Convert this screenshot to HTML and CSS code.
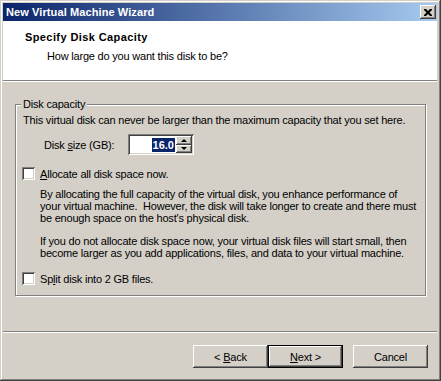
FILE: index.html
```html
<!DOCTYPE html>
<html lang="en">
<head>
  <meta charset="UTF-8">
  <title>New Virtual Machine Wizard</title>
  <link rel="stylesheet" href="styles.css">
</head>
<body>
<div class="window">
  <div class="titlebar">
    <span class="title">New Virtual Machine Wizard</span>
    <div class="close">
      <svg width="8" height="7" viewBox="0 0 8 7"><path d="M0 0h2l2 2 2-2h2v1L5.5 3.5 8 6v1H6L4 5 2 7H0V6l2.5-2.5L0 1z" fill="#000"/></svg>
    </div>
  </div>

  <div class="header">
    <div class="header-title">Specify Disk Capacity</div>
    <div class="header-sub">How large do you want this disk to be?</div>
  </div>

  <div class="content">
    <fieldset class="group">
      <legend>Disk capacity</legend>
      <p class="intro">This virtual disk can never be larger than the maximum capacity that you set here.</p>

      <div class="size-row">
        <span class="size-label">Disk <u>s</u>ize (GB):</span>
        <div class="spin">
          <div class="spin-edit"><span class="sel">16.0</span></div>
          <div class="spin-btns">
            <div class="spin-btn"><span class="arrow-up"></span></div>
            <div class="spin-btn"><span class="arrow-down"></span></div>
          </div>
        </div>
      </div>

      <div class="check-row check-alloc">
        <span class="checkbox"></span>
        <span><u>A</u>llocate all disk space now.</span>
      </div>

      <p class="note note-first">By allocating the full capacity of the virtual disk, you enhance performance of<br>your virtual machine.&nbsp; However, the disk will take longer to create and there must<br>be enough space on the host's physical disk.</p>
      <p class="note note-second">If you do not allocate disk space now, your virtual disk files will start small, then<br>become larger as you add applications, files, and data to your virtual machine.</p>

      <div class="check-row check-split">
        <span class="checkbox"></span>
        <span>Sp<u>l</u>it disk into 2 GB files.</span>
      </div>
    </fieldset>
  </div>

  <div class="footer">
    <button class="btn">&lt; <u>B</u>ack</button>
    <button class="btn btn-default"><u>N</u>ext &gt;</button>
    <button class="btn btn-cancel">Cancel</button>
  </div>
</div>
</body>
</html>
```

FILE: styles.css
```css
* {
  box-sizing: border-box;
}
body {
  margin: 0;
  font-family: "Liberation Sans", Arial, sans-serif;
  font-size: 11px;
  letter-spacing: -0.2px;
  color: #000;
  background: #D4D0C8;
}
.window {
  width: 441px;
  height: 381px;
  padding: 3px 4px 4px 3px;
  background: #D4D0C8;
  box-shadow: inset -1px -1px #404040, inset 1px 1px #D4D0C8,
              inset -2px -2px #808080, inset 2px 2px #fff;
  display: flex;
  flex-direction: column;
}
.titlebar {
  height: 18px;
  background: linear-gradient(to right, #0A246A, #A6CAF0);
  display: flex;
  align-items: center;
  justify-content: space-between;
  padding: 0 1px 0 3px;
}
.title {
  color: #fff;
  font-weight: bold;
  font-size: 11px;
  letter-spacing: 0.1px;
}
.close {
  width: 16px;
  height: 14px;
  background: #D4D0C8;
  box-shadow: inset -1px -1px #404040, inset 1px 1px #fff,
              inset -2px -2px #808080;
  display: flex;
  align-items: center;
  justify-content: center;
  padding-right: 1px;
}
.close svg {
  display: block;
}
.header {
  height: 60px;
  background: #fff;
  border-bottom: 1px solid #808080;
  padding: 9px 0 0 22px;
}
.header-title {
  font-weight: bold;
  line-height: 14px;
  letter-spacing: 0.4px;
}
.header-sub {
  line-height: 14px;
  margin-top: 5px;
  padding-left: 22px;
}
.content {
  flex: 1;
  border-top: 1px solid #fff;
  padding: 16px 11px 0 12px;
}
.group {
  margin: 0;
  padding: 0 0 10px 5px;
  border: 1px solid #808080;
  box-shadow: inset 1px 1px #fff, 1px 1px #fff;
  line-height: 12px;
}
.group legend {
  padding: 0 2px;
  line-height: 13px;
  background: #D4D0C8;
}
.group p {
  margin: 0;
  white-space: nowrap;
}
.intro {
  margin-top: 3px !important;
  padding-left: 2px;
}
.size-row {
  display: flex;
  align-items: center;
  margin-top: 8px;
}
.size-label {
  width: 107px;
  padding-left: 23px;
}
.spin {
  width: 66px;
  height: 21px;
  padding: 2px;
  display: flex;
  background: #fff;
  box-shadow: inset 1px 1px #808080, inset -1px -1px #fff,
              inset 2px 2px #404040, inset -2px -2px #D4D0C8;
}
.spin-edit {
  flex: 1;
  display: flex;
  align-items: center;
  justify-content: flex-end;
  padding-right: 1px;
}
.sel {
  background: #0A246A;
  color: #fff;
  font-weight: bold;
  line-height: 14px;
  letter-spacing: 0;
  padding: 0 1px;
}
.spin-btns {
  width: 16px;
  display: flex;
  flex-direction: column;
}
.spin-btn {
  flex: 1;
  background: #D4D0C8;
  box-shadow: inset -1px -1px #404040, inset 1px 1px #fff,
              inset -2px -2px #808080;
  display: flex;
  align-items: center;
  justify-content: center;
}
.arrow-up,
.arrow-down {
  width: 0;
  height: 0;
  border-left: 3px solid transparent;
  border-right: 3px solid transparent;
}
.arrow-up {
  border-bottom: 3px solid #000;
}
.arrow-down {
  border-top: 3px solid #000;
}
.check-row {
  display: flex;
  align-items: center;
  padding-left: 1px;
}
.check-alloc {
  margin-top: 12px;
}
.check-split {
  margin-top: 13px;
}
.checkbox {
  width: 13px;
  height: 13px;
  margin-right: 5px;
  background: #fff;
  box-shadow: inset 1px 1px #808080, inset -1px -1px #fff,
              inset 2px 2px #404040, inset -2px -2px #D4D0C8;
}
.note {
  padding-left: 19px;
}
.note-first {
  margin-top: 8px !important;
}
.note-second {
  margin-top: 11px !important;
}
.footer {
  height: 46px;
  border-top: 1px solid #808080;
  box-shadow: inset 0 1px #fff;
  display: flex;
  justify-content: flex-end;
  align-items: flex-start;
  padding: 13px 9px 0 0;
}
.btn {
  width: 75px;
  height: 23px;
  padding: 0;
  border: none;
  background: #D4D0C8;
  font-family: inherit;
  font-size: 11px;
  letter-spacing: -0.2px;
  color: #000;
  box-shadow: inset -1px -1px #404040, inset 1px 1px #fff,
              inset -2px -2px #808080;
}
.btn-default {
  box-shadow: inset 0 0 0 1px #000, inset -2px -2px #404040,
              inset 2px 2px #fff, inset -3px -3px #808080;
}
.btn-cancel {
  margin-left: 10px;
}
```
